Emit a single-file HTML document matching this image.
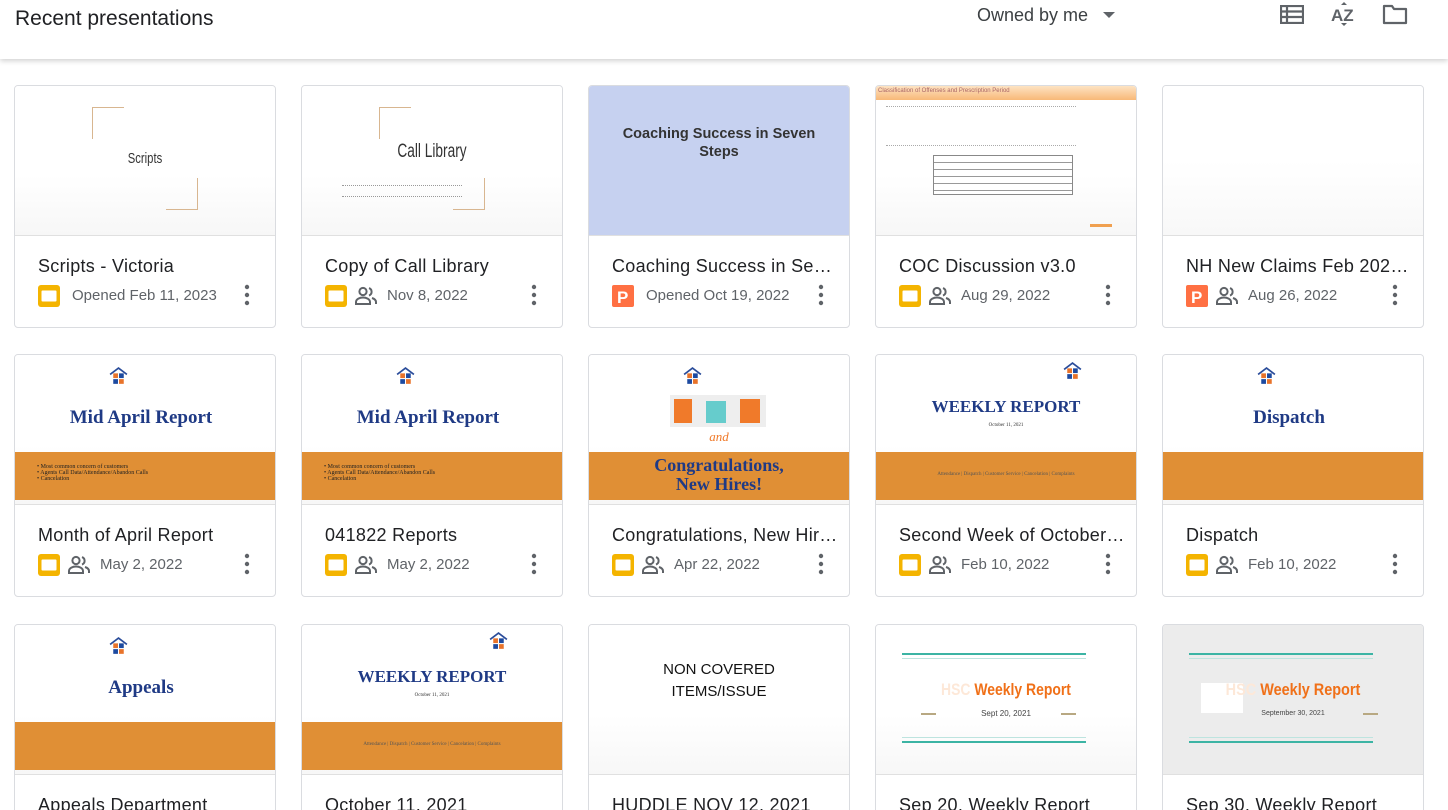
<!DOCTYPE html>
<html style="height:810px;overflow:hidden"><head><meta charset="utf-8">
<style>
*{margin:0;padding:0;box-sizing:border-box}
body{width:1448px;height:810px;overflow:hidden;background:#fff;font-family:"Liberation Sans",Arial,sans-serif;position:relative}
.hdr{position:absolute;left:0;top:0;width:1448px;height:59px;background:#fff;box-shadow:0 2px 5px rgba(0,0,0,.18);z-index:5}
.hdr h1{position:absolute;left:15px;top:7px;font-size:21px;font-weight:normal;color:#202124}
.own{position:absolute;left:977px;top:5px;font-size:18px;color:#3c4043}
.card{position:absolute;width:262px;height:243px;border:1px solid #dadce0;border-radius:4px;overflow:hidden;background:#fff}
.th{position:absolute;left:0;top:0;width:100%;height:150px;border-bottom:1px solid #e0e0e0;overflow:hidden;background:linear-gradient(#fff 60%,#f7f7f7)}
.tt{position:absolute;left:23px;top:170px;font-size:18px;letter-spacing:.3px;color:#202124;white-space:nowrap;width:226px;overflow:hidden;text-overflow:ellipsis}
.ic{position:absolute;left:23px;top:199px}
.pp{position:absolute;left:52px;top:200px}
.dt{position:absolute;top:201px;font-size:15px;color:#5f6368;white-space:nowrap}
.kb{position:absolute;left:228px;top:198px}
.band{position:absolute;left:0;top:97px;width:100%;height:48px;background:#e08f35}
.ser{font-family:"Liberation Serif",serif;font-weight:bold;color:#1f3a85;position:absolute;width:100%;text-align:center}
.logo{position:absolute}
.br1{position:absolute;width:32px;height:32px;border-left:1px solid #d8b690;border-top:1px solid #d8b690}
.br2{position:absolute;width:32px;height:32px;border-right:1px solid #d8b690;border-bottom:1px solid #d8b690}
</style></head><body>
<div class="hdr">
<h1>Recent presentations</h1>
<div class="own">Owned by me</div>
<svg style="position:absolute;left:1102px;top:11px" width="14" height="8"><path d="M1 1h12L7 7z" fill="#5f6368"/></svg>
<svg style="position:absolute;left:1280px;top:5px" width="24" height="19"><path d="M1 1h22v17H1z M1 6.5h22 M1 12h22 M7 1v17" fill="none" stroke="#5f6368" stroke-width="2.2"/></svg>
<svg style="position:absolute;left:1330px;top:1px" width="28" height="26"><path d="M14 1l-3 3h6z M14 25l-3-3h6z" fill="#5f6368"/><text x="1" y="20" font-family="Liberation Sans" font-weight="bold" font-size="17" fill="#5f6368">AZ</text></svg>
<svg style="position:absolute;left:1382px;top:4px" width="26" height="21"><path d="M2 2h8l2 3h12v14H2z" fill="none" stroke="#5f6368" stroke-width="2.2" stroke-linejoin="round"/></svg>
</div>

<svg width="0" height="0" style="position:absolute">
<defs>
<symbol id="sl" viewBox="0 0 22 22"><rect width="22" height="22" rx="3" fill="#f4b400"/><rect x="3.5" y="5.5" width="15" height="11" rx="1" fill="#fff"/></symbol>
<symbol id="pt" viewBox="0 0 22 22"><rect width="22" height="22" rx="2" fill="#ff7043"/><text x="5" y="18" font-family="Liberation Sans" font-weight="bold" font-size="17" fill="#fff">P</text></symbol>
<symbol id="pe" viewBox="0 0 24 20"><circle cx="9" cy="5.5" r="3.6" fill="none" stroke="#5f6368" stroke-width="2"/><path d="M2 18v-2c0-3 4-4.5 7-4.5s7 1.5 7 4.5v2z" fill="none" stroke="#5f6368" stroke-width="2"/><path d="M15 2a4 4 0 0 1 0 7.5 M18 12c2 .7 4 2 4 4v2" fill="none" stroke="#5f6368" stroke-width="2"/></symbol>
<symbol id="kb" viewBox="0 0 8 22"><circle cx="4" cy="3" r="2.2" fill="#5f6368"/><circle cx="4" cy="11" r="2.2" fill="#5f6368"/><circle cx="4" cy="19" r="2.2" fill="#5f6368"/></symbol>
<symbol id="lg" viewBox="0 0 20 20"><path d="M2 8L10 2l8 6" fill="none" stroke="#2a4c9a" stroke-width="1.6"/><rect x="5" y="7" width="4.5" height="4.5" fill="#e8732a"/><rect x="10.5" y="7" width="4.5" height="4.5" fill="#1d4aa0"/><rect x="5" y="12.5" width="4.5" height="4.5" fill="#1d4aa0"/><rect x="10.5" y="12.5" width="4.5" height="4.5" fill="#e8732a"/></symbol>
</defs></svg>

<!-- Row 1 -->
<div class="card" style="left:14px;top:85px">
 <div class="th"><div class="br1" style="left:77px;top:21px"></div><div class="br2" style="left:151px;top:92px"></div>
 <div style="position:absolute;left:0;width:100%;top:64px;text-align:center;font-size:15px;color:#333;transform:scaleX(.75)">Scripts</div></div>
 <div class="tt">Scripts - Victoria</div>
 <svg class="ic" width="22" height="22"><use href="#sl"/></svg>
 <div class="dt" style="left:57px">Opened Feb 11, 2023</div>
 <svg class="kb" width="8" height="22"><use href="#kb"/></svg>
</div>
<div class="card" style="left:301px;top:85px">
 <div class="th"><div class="br1" style="left:77px;top:21px"></div><div class="br2" style="left:151px;top:92px"></div>
 <div style="position:absolute;left:0;width:100%;top:55px;text-align:center;font-size:19px;color:#333;transform:scaleX(.72)">Call Library</div>
 <div style="position:absolute;left:40px;top:99px;width:120px;height:12px;border-top:1px dotted #999;border-bottom:1px dotted #999"></div></div>
 <div class="tt">Copy of Call Library</div>
 <svg class="ic" width="22" height="22"><use href="#sl"/></svg>
 <svg class="pp" width="24" height="20"><use href="#pe"/></svg>
 <div class="dt" style="left:85px">Nov 8, 2022</div>
 <svg class="kb" width="8" height="22"><use href="#kb"/></svg>
</div>
<div class="card" style="left:588px;top:85px">
 <div class="th" style="background:#c6d1f0"><div style="position:absolute;left:0;width:100%;top:39px;text-align:center;font-size:14.5px;font-weight:bold;color:#333;line-height:18px">Coaching Success in Seven<br>Steps</div></div>
 <div class="tt">Coaching Success in Seven Steps</div>
 <svg class="ic" width="22" height="22"><use href="#pt"/></svg>
 <div class="dt" style="left:57px">Opened Oct 19, 2022</div>
 <svg class="kb" width="8" height="22"><use href="#kb"/></svg>
</div>
<div class="card" style="left:875px;top:85px">
 <div class="th"><div style="position:absolute;left:0;top:0;width:100%;height:14px;background:linear-gradient(#fde3c3,#f8b878);font-size:6px;color:#a66;padding:2px">Classification of Offenses and Prescription Period</div>
 <div style="position:absolute;left:10px;top:20px;width:190px;height:40px;border-top:1px dotted #aaa;border-bottom:1px dotted #aaa"></div>
 <div style="position:absolute;left:57px;top:69px;width:140px;height:40px;border:1px solid #888;background:repeating-linear-gradient(#fff 0 6px,#999 6px 7px)"></div>
 <div style="position:absolute;left:214px;top:138px;width:22px;height:3px;background:#f0a050"></div></div>
 <div class="tt">COC Discussion v3.0</div>
 <svg class="ic" width="22" height="22"><use href="#sl"/></svg>
 <svg class="pp" width="24" height="20"><use href="#pe"/></svg>
 <div class="dt" style="left:85px">Aug 29, 2022</div>
 <svg class="kb" width="8" height="22"><use href="#kb"/></svg>
</div>
<div class="card" style="left:1162px;top:85px">
 <div class="th" style="background:linear-gradient(#fff 50%,#f8f8f8)"></div>
 <div class="tt">NH New Claims Feb 2022 Report</div>
 <svg class="ic" width="22" height="22"><use href="#pt"/></svg>
 <svg class="pp" width="24" height="20"><use href="#pe"/></svg>
 <div class="dt" style="left:85px">Aug 26, 2022</div>
 <svg class="kb" width="8" height="22"><use href="#kb"/></svg>
</div>

<!-- Row 2 -->
<div class="card" style="left:14px;top:354px">
 <div class="th"><svg class="logo" style="left:93px;top:11px" width="21" height="21"><use href="#lg"/></svg>
 <div class="ser" style="top:52px;font-size:19px;left:-4px">Mid April Report</div>
 <div class="band"><div style="position:absolute;left:22px;top:12px;font-family:'Liberation Serif';font-size:6px;line-height:6px;color:#222">• Most common concern of customers<br>• Agents Call Data/Attendance/Abandon Calls<br>• Cancelation</div></div></div>
 <div class="tt">Month of April Report</div>
 <svg class="ic" width="22" height="22"><use href="#sl"/></svg>
 <svg class="pp" width="24" height="20"><use href="#pe"/></svg>
 <div class="dt" style="left:85px">May 2, 2022</div>
 <svg class="kb" width="8" height="22"><use href="#kb"/></svg>
</div>
<div class="card" style="left:301px;top:354px">
 <div class="th"><svg class="logo" style="left:93px;top:11px" width="21" height="21"><use href="#lg"/></svg>
 <div class="ser" style="top:52px;font-size:19px;left:-4px">Mid April Report</div>
 <div class="band"><div style="position:absolute;left:22px;top:12px;font-family:'Liberation Serif';font-size:6px;line-height:6px;color:#222">• Most common concern of customers<br>• Agents Call Data/Attendance/Abandon Calls<br>• Cancelation</div></div></div>
 <div class="tt">041822 Reports</div>
 <svg class="ic" width="22" height="22"><use href="#sl"/></svg>
 <svg class="pp" width="24" height="20"><use href="#pe"/></svg>
 <div class="dt" style="left:85px">May 2, 2022</div>
 <svg class="kb" width="8" height="22"><use href="#kb"/></svg>
</div>
<div class="card" style="left:588px;top:354px">
 <div class="th"><svg class="logo" style="left:93px;top:11px" width="21" height="21"><use href="#lg"/></svg>
 <div style="position:absolute;left:81px;top:40px;width:96px;height:32px;background:#eee"><span style="position:absolute;left:4px;top:4px;width:18px;height:24px;background:#f07a2a"></span><span style="position:absolute;left:36px;top:6px;width:20px;height:22px;background:#6cc"></span><span style="position:absolute;left:70px;top:4px;width:20px;height:24px;background:#f07a2a"></span></div>
 <div style="position:absolute;left:0;width:100%;top:74px;text-align:center;font-family:'Liberation Serif';font-style:italic;font-size:13px;color:#f07a2a">and</div>
 <div class="band"><div class="ser" style="top:4px;font-size:18px;line-height:19px">Congratulations,<br>New Hires!</div></div></div>
 <div class="tt">Congratulations, New Hires!</div>
 <svg class="ic" width="22" height="22"><use href="#sl"/></svg>
 <svg class="pp" width="24" height="20"><use href="#pe"/></svg>
 <div class="dt" style="left:85px">Apr 22, 2022</div>
 <svg class="kb" width="8" height="22"><use href="#kb"/></svg>
</div>
<div class="card" style="left:875px;top:354px">
 <div class="th"><svg class="logo" style="left:186px;top:6px" width="21" height="21"><use href="#lg"/></svg>
 <div class="ser" style="top:42px;font-size:17px">WEEKLY REPORT</div>
 <div class="ser" style="top:68px;font-size:5px;color:#333;font-weight:normal">October 11, 2021</div>
 <div class="band"><div class="ser" style="top:20px;font-size:5px;font-weight:normal;color:#555">Attendance | Dispatch | Customer Service | Cancelation | Complaints</div></div></div>
 <div class="tt">Second Week of October Report</div>
 <svg class="ic" width="22" height="22"><use href="#sl"/></svg>
 <svg class="pp" width="24" height="20"><use href="#pe"/></svg>
 <div class="dt" style="left:85px">Feb 10, 2022</div>
 <svg class="kb" width="8" height="22"><use href="#kb"/></svg>
</div>
<div class="card" style="left:1162px;top:354px">
 <div class="th"><svg class="logo" style="left:93px;top:11px" width="21" height="21"><use href="#lg"/></svg>
 <div class="ser" style="top:52px;font-size:19px;left:-4px">Dispatch</div>
 <div class="band"></div></div>
 <div class="tt">Dispatch</div>
 <svg class="ic" width="22" height="22"><use href="#sl"/></svg>
 <svg class="pp" width="24" height="20"><use href="#pe"/></svg>
 <div class="dt" style="left:85px">Feb 10, 2022</div>
 <svg class="kb" width="8" height="22"><use href="#kb"/></svg>
</div>

<!-- Row 3 -->
<div class="card" style="left:14px;top:624px">
 <div class="th"><svg class="logo" style="left:93px;top:11px" width="21" height="21"><use href="#lg"/></svg>
 <div class="ser" style="top:52px;font-size:19px;left:-4px">Appeals</div>
 <div class="band"></div></div>
 <div class="tt">Appeals Department</div>
</div>
<div class="card" style="left:301px;top:624px">
 <div class="th"><svg class="logo" style="left:186px;top:6px" width="21" height="21"><use href="#lg"/></svg>
 <div class="ser" style="top:42px;font-size:17px">WEEKLY REPORT</div>
 <div class="ser" style="top:68px;font-size:5px;color:#333;font-weight:normal">October 11, 2021</div>
 <div class="band"><div class="ser" style="top:20px;font-size:5px;font-weight:normal;color:#555">Attendance | Dispatch | Customer Service | Cancelation | Complaints</div></div></div>
 <div class="tt">October 11, 2021</div>
</div>
<div class="card" style="left:588px;top:624px">
 <div class="th"><div style="position:absolute;left:0;width:100%;top:34px;text-align:center;font-size:15px;color:#111;line-height:22px">NON COVERED<br>ITEMS/ISSUE</div></div>
 <div class="tt">HUDDLE NOV 12, 2021</div>
</div>
<div class="card" style="left:875px;top:624px">
 <div class="th">
 <div style="position:absolute;left:26px;top:28px;width:184px;height:2px;background:#3cb4a4"></div>
 <div style="position:absolute;left:26px;top:33px;width:184px;height:1px;background:#bde4df"></div>
 <div style="position:absolute;left:0;width:100%;top:55px;text-align:center;font-size:17px;font-weight:bold;color:#f07018;transform:scaleX(.82)"><span style="color:#fde8d8">HSC </span>Weekly Report</div>
 <div style="position:absolute;left:0;width:100%;top:84px;text-align:center;font-size:8px;color:#444">Sept 20, 2021</div>
 <div style="position:absolute;left:45px;top:88px;width:15px;height:2px;background:#b8a882"></div>
 <div style="position:absolute;left:185px;top:88px;width:15px;height:2px;background:#b8a882"></div>
 <div style="position:absolute;left:26px;top:112px;width:184px;height:1px;background:#bde4df"></div>
 <div style="position:absolute;left:26px;top:116px;width:184px;height:2px;background:#3cb4a4"></div></div>
 <div class="tt">Sep 20, Weekly Report</div>
</div>
<div class="card" style="left:1162px;top:624px">
 <div class="th" style="background:#ececec">
 <div style="position:absolute;left:26px;top:28px;width:184px;height:2px;background:#3cb4a4"></div>
 <div style="position:absolute;left:26px;top:33px;width:184px;height:1px;background:#bde4df"></div>
 <div style="position:absolute;left:38px;top:58px;width:42px;height:30px;background:#fff"></div>
 <div style="position:absolute;left:0;width:100%;top:55px;text-align:center;font-size:17px;font-weight:bold;color:#f07018;transform:scaleX(.85)"><span style="color:#fde8d8">HSC </span>Weekly Report</div>
 <div style="position:absolute;left:0;width:100%;top:85px;text-align:center;font-size:7px;color:#444">September 30, 2021</div>
 <div style="position:absolute;left:200px;top:88px;width:15px;height:2px;background:#b8a882"></div>
 <div style="position:absolute;left:26px;top:112px;width:184px;height:1px;background:#bde4df"></div>
 <div style="position:absolute;left:26px;top:116px;width:184px;height:2px;background:#3cb4a4"></div></div>
 <div class="tt">Sep 30, Weekly Report</div>
</div>
</body></html>
